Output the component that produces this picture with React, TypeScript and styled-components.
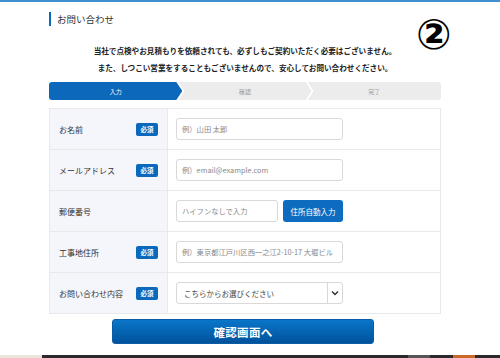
import React from 'react';
import styled, { createGlobalStyle } from 'styled-components';

/**
 * Contact form page (お問い合わせ)
 * Step indicator, form table and submit button
 */

const GlobalStyle = createGlobalStyle`
  html, body {
    margin: 0;
    padding: 0;
    background: #fff;
    font-family: "Noto Sans CJK JP", "Noto Sans", "Liberation Sans", sans-serif;
    color: #333;
  }
  #root {
    height: 358px;
  }
`;

const Page = styled.div`
  position: relative;
  display: flex;
  flex-direction: column;
  height: 358px;
  overflow: hidden;
  border-top: 2px solid #3f8fd2;
  box-sizing: border-box;
`;

const Main = styled.div`
  flex: 1;
  width: 392px;
  margin-left: 49px;
  display: flex;
  flex-direction: column;
`;

// Heading
const Heading = styled.h1`
  margin: 10px 0 0;
  padding-left: 6px;
  border-left: 2px solid #0b68bb;
  height: 14px;
  line-height: 14px;
  font-size: 9.5px;
  font-weight: normal;
  color: #333;
`;

const Annotation = styled.div`
  position: absolute;
  left: 416px;
  top: 12px;
  font-family: "DejaVu Sans", "Liberation Sans", sans-serif;
  font-size: 42px;
  font-weight: bold;
  color: #000;
  line-height: 1;
`;

const Intro = styled.p`
  margin: 16px 0 0;
  text-align: center;
  font-size: 7.6px;
  font-weight: bold;
  line-height: 17px;
  color: #222;
`;

// Steps
const Steps = styled.div`
  display: flex;
  height: 18px;
  margin-top: 6px;
`;

const Step = styled.div<{ $active?: boolean; $first?: boolean; $last?: boolean }>`
  flex: 1;
  display: flex;
  align-items: center;
  justify-content: center;
  margin-left: ${p => (p.$first ? '0' : '-4px')};
  background: ${p => (p.$active ? '#0b68bb' : '#ececec')};
  color: ${p => (p.$active ? '#fff' : '#999')};
  font-size: 6px;
  border-radius: ${p => (p.$first ? '3px 0 0 3px' : p.$last ? '0 3px 3px 0' : '0')};
  clip-path: ${p =>
    p.$first
      ? 'polygon(0 0, calc(100% - 6px) 0, 100% 50%, calc(100% - 6px) 100%, 0 100%)'
      : p.$last
        ? 'polygon(0 0, 100% 0, 100% 100%, 0 100%, 6px 50%)'
        : 'polygon(0 0, calc(100% - 6px) 0, 100% 50%, calc(100% - 6px) 100%, 0 100%, 6px 50%)'};
`;

// Form table
const FormTable = styled.div`
  margin-top: 8px;
  border: 1px solid #e9e9ec;
  border-bottom: none;
`;

const Row = styled.div`
  display: grid;
  grid-template-columns: 118px 1fr;
  height: 41px;
  border-bottom: 1px solid #e9e9ec;
  box-sizing: border-box;
`;

const LabelCell = styled.div`
  display: flex;
  align-items: center;
  justify-content: space-between;
  padding: 0 9px 0 9px;
  background: #f5f6fb;
  border-right: 1px solid #e9e9ec;
  font-size: 8px;
  color: #333;
`;

const Badge = styled.span`
  display: inline-flex;
  align-items: center;
  justify-content: center;
  width: 22px;
  height: 13px;
  border-radius: 2px;
  background: #0b68bb;
  color: #fff;
  font-size: 6.5px;
  font-weight: bold;
`;

const FieldCell = styled.div`
  display: flex;
  align-items: center;
  gap: 5px;
  padding-left: 8px;
`;

const TextInput = styled.input<{ $width?: number }>`
  box-sizing: border-box;
  width: ${p => p.$width ?? 167}px;
  height: 22px;
  padding: 0 4px 0 5px;
  border: 1px solid #d9d9d9;
  border-radius: 3px;
  font-family: inherit;
  font-size: 7.3px;
  color: #333;
  outline: none;
  &::placeholder {
    color: #888;
  }
`;

const ZipButton = styled.button`
  width: 60px;
  height: 22px;
  border: none;
  border-radius: 3px;
  background: #0d6cc0;
  color: #fff;
  font-family: inherit;
  font-size: 7.5px;
  padding: 0;
`;

const Select = styled.div`
  box-sizing: border-box;
  display: flex;
  width: 167px;
  height: 22px;
  border: 1px solid #d9d9d9;
  border-radius: 3px;
  font-size: 7.5px;
  color: #444;
`;

const SelectText = styled.div`
  flex: 1;
  display: flex;
  align-items: center;
  padding-left: 7px;
`;

const SelectArrow = styled.div`
  width: 14px;
  display: flex;
  align-items: center;
  justify-content: center;
  border-left: 1px solid #d9d9d9;
`;

// Submit
const SubmitWrap = styled.div`
  display: flex;
  justify-content: center;
  margin-top: 5px;
  padding-right: 4px;
`;

const SubmitButton = styled.button`
  width: 262px;
  height: 25px;
  border: 1px solid #0a5ca6;
  border-radius: 3px;
  background: linear-gradient(#0a76c9, #00529b);
  color: #fff;
  font-family: inherit;
  font-size: 11.5px;
  font-weight: bold;
  letter-spacing: 0.3px;
`;

// Taskbar strip at the bottom edge of the capture
const Taskbar = styled.div`
  display: flex;
  height: 3px;
  background: #2a2a2a;
`;

const TaskbarPart = styled.div<{ $colour: string; $width: number; $left?: number }>`
  width: ${p => p.$width}px;
  margin-left: ${p => p.$left ?? 0}px;
  background: ${p => p.$colour};
`;

const Chevron = () => (
  <svg width="8" height="6" viewBox="0 0 8 6">
    <path d="M1 1.5 L4 4.5 L7 1.5" fill="none" stroke="#333" strokeWidth="1.5" />
  </svg>
);

interface FieldRow {
  label: string;
  required: boolean;
  field: React.ReactNode;
}

const rows: FieldRow[] = [
  { label: 'お名前', required: true, field: <TextInput placeholder="例）山田 太郎" /> },
  { label: 'メールアドレス', required: true, field: <TextInput placeholder="例）email@example.com" /> },
  {
    label: '郵便番号',
    required: false,
    field: (
      <>
        <TextInput $width={102} placeholder="ハイフンなしで入力" />
        <ZipButton>住所自動入力</ZipButton>
      </>
    ),
  },
  { label: '工事地住所', required: true, field: <TextInput placeholder="例）東京都江戸川区西一之江2-10-17 大堀ビル" /> },
  {
    label: 'お問い合わせ内容',
    required: true,
    field: (
      <Select>
        <SelectText>こちらからお選びください</SelectText>
        <SelectArrow><Chevron /></SelectArrow>
      </Select>
    ),
  },
];

const App: React.FC = () => {
  return (
    <>
      <GlobalStyle />
      <Page>
        <Annotation>②</Annotation>
        <Main>
          <Heading>お問い合わせ</Heading>

          <Intro>
            当社で点検やお見積もりを依頼されても、必ずしもご契約いただく必要はございません。<br />
            また、しつこい営業をすることもございませんので、安心してお問い合わせください。
          </Intro>

          <Steps>
            <Step $active $first>入力</Step>
            <Step>確認</Step>
            <Step $last>完了</Step>
          </Steps>

          <FormTable>
            {rows.map(row => (
              <Row key={row.label}>
                <LabelCell>
                  {row.label}
                  {row.required && <Badge>必須</Badge>}
                </LabelCell>
                <FieldCell>{row.field}</FieldCell>
              </Row>
            ))}
          </FormTable>

          <SubmitWrap>
            <SubmitButton>確認画面へ</SubmitButton>
          </SubmitWrap>
        </Main>

        <Taskbar>
          <TaskbarPart $colour="#e9e4dc" $width={42} />
          <TaskbarPart $colour="#555" $width={22} $left={366} />
          <TaskbarPart $colour="#c8692a" $width={22} $left={23} />
        </Taskbar>
      </Page>
    </>
  );
};

export default App;
